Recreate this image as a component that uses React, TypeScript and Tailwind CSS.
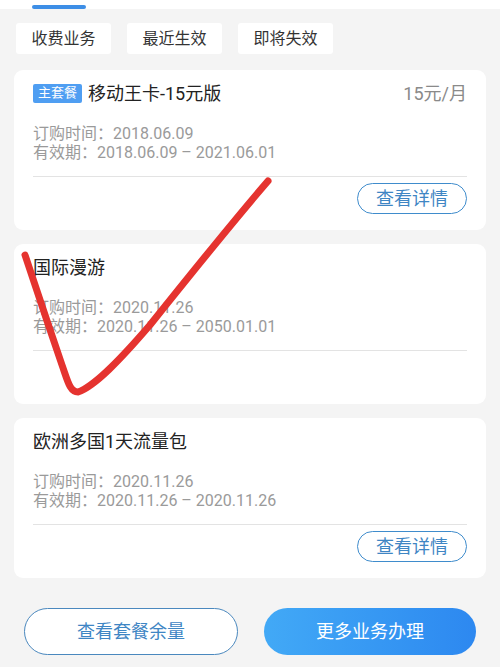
import React from 'react';

type Pkg = {
  badge?: string;
  name: string;
  price?: string;
  ordered: string;
  valid: string;
  detail: boolean;
};

const packages: Pkg[] = [
  { badge: '主套餐', name: '移动王卡-15元版', price: '15元/月', ordered: '2018.06.09', valid: '2018.06.09 – 2021.06.01', detail: true },
  { name: '国际漫游', ordered: '2020.11.26', valid: '2020.11.26 – 2050.01.01', detail: false },
  { name: '欧洲多国1天流量包', ordered: '2020.11.26', valid: '2020.11.26 – 2020.11.26', detail: true },
];

const tabs = ['收费业务', '最近生效', '即将失效'];

function PackageCard({ pkg }: { pkg: Pkg }) {
  return (
    <div className="mx-[14px] flex h-[160px] flex-col rounded-[9px] bg-white px-[19px] pt-[10px]">
      <div className="flex h-[26px] items-center">
        {pkg.badge && (
          <span className="mr-[6px] flex h-[19px] w-[49px] items-center justify-center rounded-[2px] bg-[#4f9ef2] text-[13px] text-white">
            {pkg.badge}
          </span>
        )}
        <span className="text-[18px] text-[#222]">{pkg.name}</span>
        {pkg.price && <span className="ml-auto text-[18px] text-[#8a8a8a]">{pkg.price}</span>}
      </div>
      <div className="mt-[18px] text-[16px] leading-[19px] text-[#9a9a9a]">
        <div>订购时间：{pkg.ordered}</div>
        <div>有效期：{pkg.valid}</div>
      </div>
      <div className="mt-[14px] h-px bg-[#e3e3e3]" />
      <div className="flex h-[42px] items-center justify-end">
        {pkg.detail && (
          <button className="flex h-[31px] w-[110px] items-center justify-center rounded-full border border-[#3f8ccc] text-[18px] text-[#3f86c4]">
            查看详情
          </button>
        )}
      </div>
    </div>
  );
}

export default function App() {
  return (
    <div
      className="relative flex h-[667px] w-[500px] flex-col overflow-hidden bg-[#f4f4f4]"
      style={{ fontFamily: 'Roboto, "Noto Sans CJK SC", sans-serif' }}
    >
      <div className="h-[9px] bg-white px-[32px]">
        <div className="mt-[5px] h-[4px] w-[54px] rounded-full bg-[#3d8ee6]" />
      </div>

      <div className="mt-[14px] flex gap-[16px] px-[16px]">
        {tabs.map((t) => (
          <div key={t} className="flex h-[31px] w-[95px] items-center justify-center rounded-[3px] bg-white text-[16px] text-[#333]">
            {t}
          </div>
        ))}
      </div>

      <div className="mt-[16px] flex flex-col gap-[14px]">
        {packages.map((p) => (
          <PackageCard key={p.name} pkg={p} />
        ))}
      </div>

      <div className="mt-[30px] flex gap-[26px] px-[24px]">
        <button className="flex h-[47px] w-[214px] items-center justify-center rounded-full border border-[#4a88be] bg-white text-[18px] text-[#3f86c4]">
          查看套餐余量
        </button>
        <button className="flex h-[47px] w-[212px] items-center justify-center rounded-full bg-gradient-to-r from-[#42a9f6] to-[#2d88f0] text-[18px] text-white">
          更多业务办理
        </button>
      </div>

      <svg className="pointer-events-none absolute left-0 top-0" width="500" height="667" viewBox="0 0 500 667">
        <path
          d="M25 255 C 35 285, 50 330, 62 365 C 68 382, 70 392, 78 392 C 95 386, 120 360, 150 325 C 190 275, 230 225, 268 181"
          fill="none"
          stroke="#e5332f"
          strokeWidth="7"
          strokeLinecap="round"
          strokeLinejoin="round"
        />
      </svg>
    </div>
  );
}
